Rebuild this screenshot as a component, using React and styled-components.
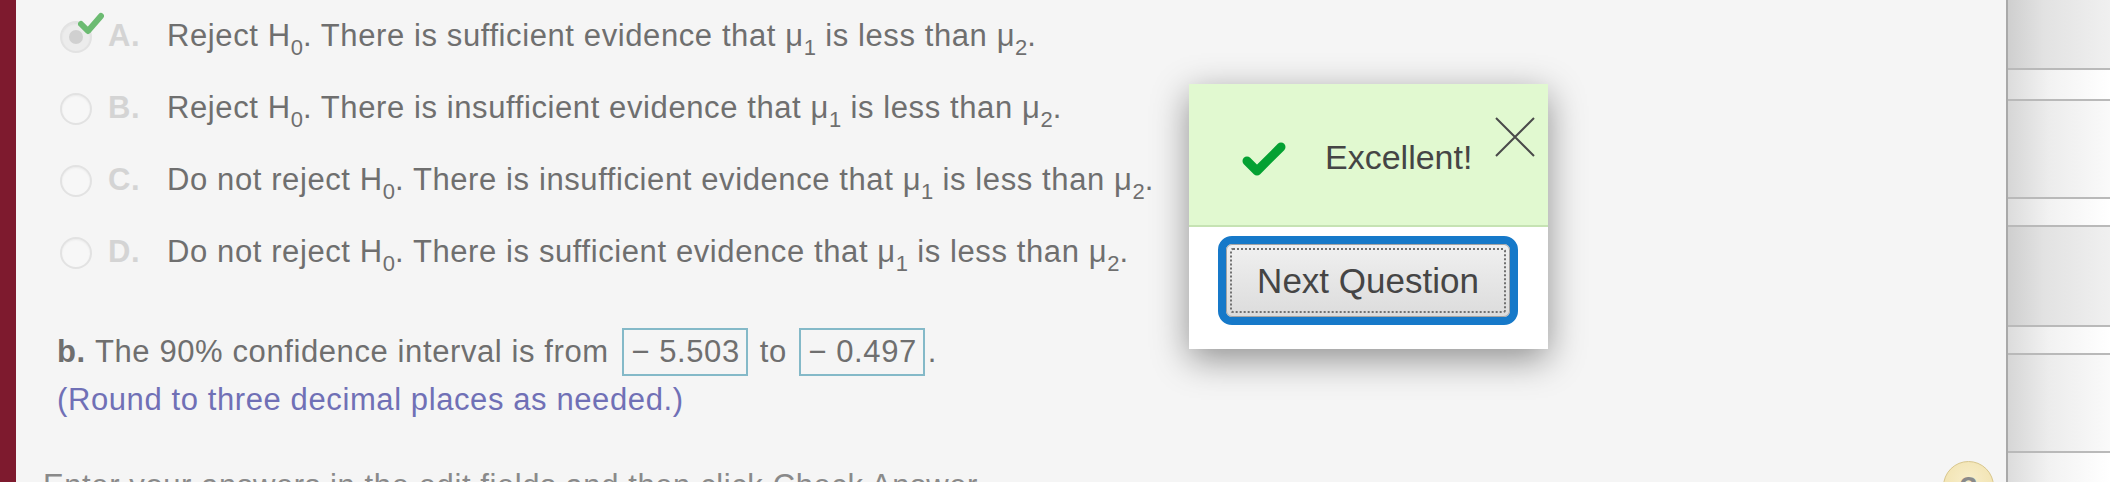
import React from "react";
import styled, { createGlobalStyle } from "styled-components";

const Global = createGlobalStyle`
  html, body, #root { margin: 0; padding: 0; height: 100%; }
  body { overflow: hidden; background: #f5f5f5; font-family: "Liberation Sans", Arial, sans-serif; }
`;

const Page = styled.div`
  position: relative;
  display: flex;
  height: 482px;
  width: 2110px;
  overflow: hidden;
`;

const Bar = styled.div`
  width: 16px;
  flex: none;
  background: #7e1a2e;
`;

const Content = styled.div`
  flex: 1;
  background: #f5f5f5;
  color: #6f6f6f;
  font-size: 31px;
  letter-spacing: 0.6px;
`;

const Options = styled.div`
  display: flex;
  flex-direction: column;
  padding-left: 44px;
`;

const Row = styled.div`
  display: flex;
  align-items: center;
  height: 72px;
  line-height: 72px;
  white-space: nowrap;
`;

const RadioWrap = styled.span`
  position: relative;
  width: 32px;
  height: 32px;
  flex: none;
  margin-top: 2px;
`;

const Radio = styled.span`
  display: block;
  box-sizing: border-box;
  width: 32px;
  height: 32px;
  border-radius: 50%;
  border: 2px solid #e2e2e2;
  background: ${(p) => (p.$checked ? "#ececec" : "#f7f7f7")};
  box-shadow: inset 0 1px 2px rgba(0, 0, 0, 0.05);
  &::after {
    content: "";
    display: ${(p) => (p.$checked ? "block" : "none")};
    position: absolute;
    left: 9px;
    top: 9px;
    width: 14px;
    height: 14px;
    border-radius: 50%;
    background: #d0d0d0;
  }
`;

const RadioCheck = styled.svg`
  position: absolute;
  left: 18px;
  top: -10px;
`;

const Letter = styled.span`
  width: 59px;
  margin-left: 16px;
  flex: none;
  font-weight: bold;
  color: #d4d4d4;
`;

const Sub = styled.sub`
  font-size: 22px;
  line-height: 1;
  vertical-align: -9px;
  letter-spacing: 0;
`;

const PartB = styled.div`
  margin-top: 40px;
  padding-left: 41px;
  line-height: 48px;
  white-space: nowrap;
`;

const Line = styled.div`
  display: flex;
  align-items: center;
  height: 48px;
`;

const Bold = styled.b`
  font-weight: bold;
`;

const Answer = styled.span`
  box-sizing: border-box;
  display: inline-flex;
  align-items: center;
  justify-content: flex-end;
  height: 48px;
  width: 126px;
  padding-right: 6px;
  border: 2px solid #84b9c8;
  margin: 0 ${(p) => p.$after}px 0 ${(p) => p.$before}px;
`;

const Hint = styled.div`
  color: #7070b6;
  height: 48px;
`;

const Footer = styled.div`
  margin-top: 38px;
  padding-left: 27px;
  line-height: 48px;
  color: #8a8a8a;
  white-space: nowrap;
`;

const Sidebar = styled.div`
  width: 104px;
  flex: none;
  display: flex;
  flex-direction: column;
  border-left: 2px solid #a9a9a9;
  box-sizing: border-box;
`;

const Stripe = styled.div`
  flex: ${(p) => (p.$h ? "none" : "1")};
  height: ${(p) => (p.$h ? `${p.$h}px` : "auto")};
  border-bottom: ${(p) => (p.$h ? "2px solid #b9b9b9" : "none")};
  background: ${(p) =>
    p.$tone === "dark"
      ? "linear-gradient(to right, #cfcfcf 0%, #e2e2e2 35%, #f0f0f0 100%)"
      : p.$tone === "mid"
      ? "linear-gradient(to right, #d6d6d6 0%, #ececec 40%, #fafafa 100%)"
      : "linear-gradient(to right, #dcdcdc 0%, #f2f2f2 40%, #ffffff 100%)"};
`;

const Popup = styled.div`
  position: absolute;
  left: 1189px;
  top: 84px;
  width: 359px;
  background: #fff;
  box-shadow: 0 10px 34px rgba(0, 0, 0, 0.42);
  font-family: "Liberation Sans", Arial, sans-serif;
  color: #454545;
`;

const Banner = styled.div`
  position: relative;
  height: 143px;
  background: #e1f9d0;
  border-bottom: 2px solid #c6e3b3;
  display: flex;
  align-items: flex-start;
  padding: 57px 0 0 52px;
  box-sizing: border-box;
`;

const Message = styled.span`
  font-size: 34px;
  line-height: 34px;
  margin-left: 38px;
  margin-top: -1px;
`;

const Close = styled.svg`
  position: absolute;
  left: 306px;
  top: 33px;
`;

const Actions = styled.div`
  height: 122px;
  padding: 9px 0 0 29px;
  box-sizing: border-box;
`;

const FocusRing = styled.div`
  box-sizing: border-box;
  width: 300px;
  height: 89px;
  border: 8px solid #1679c9;
  border-radius: 14px;
  display: flex;
`;

const Button = styled.button`
  flex: 1;
  margin: 0;
  border: 1px solid #a4a4a4;
  border-radius: 6px;
  background: linear-gradient(to bottom, #f0f0f0, #dcdcdc);
  font-family: "Liberation Sans", Arial, sans-serif;
  font-size: 35px;
  color: #454545;
  position: relative;
  padding: 0;
  &::after {
    content: "";
    position: absolute;
    inset: 3px;
    border: 2px dotted #707070;
    border-radius: 3px;
  }
`;

const Help = styled.div`
  position: absolute;
  left: 1943px;
  top: 461px;
  width: 51px;
  height: 51px;
  box-sizing: border-box;
  border-radius: 50%;
  border: 1.5px solid #d8c68c;
  background: radial-gradient(circle at 50% 40%, #f8eecb, #efdfa8);
  color: #8a8a8a;
  font-weight: bold;
  font-size: 30px;
  text-align: center;
  line-height: 50px;
`;

const options = [
  { l: "A.", pre: "Reject H", mid: "sufficient", checked: true },
  { l: "B.", pre: "Reject H", mid: "insufficient" },
  { l: "C.", pre: "Do not reject H", mid: "insufficient" },
  { l: "D.", pre: "Do not reject H", mid: "sufficient" },
];

export default function App() {
  return (
    <>
      <Global />
      <Page>
        <Bar />
        <Content>
          <Options>
            {options.map((o) => (
              <Row key={o.l}>
                <RadioWrap>
                  <Radio $checked={o.checked} />
                  {o.checked && (
                    <RadioCheck width="26" height="24" viewBox="0 0 26 24">
                      <path d="M3 13 L10 20 L23 5" fill="none" stroke="#6cbb72" strokeWidth="6" strokeLinecap="round" strokeLinejoin="round" />
                    </RadioCheck>
                  )}
                </RadioWrap>
                <Letter>{o.l}</Letter>
                <span>
                  {o.pre}
                  <Sub>0</Sub>. There is {o.mid} evidence that μ<Sub>1</Sub> is less than μ<Sub>2</Sub>.
                </span>
              </Row>
            ))}
          </Options>
          <PartB>
            <Line>
              <Bold>b.</Bold>&nbsp;The 90% confidence interval is from
              <Answer $before={13} $after={12}>− 5.503</Answer>
              to
              <Answer $before={12} $after={3}>− 0.497</Answer>.
            </Line>
            <Hint>(Round to three decimal places as needed.)</Hint>
          </PartB>
          <Footer>Enter your answers in the edit fields and then click Check Answer.</Footer>
        </Content>
        <Sidebar>
          <Stripe $h={68} $tone="dark" />
          <Stripe $h={29} $tone="light" />
          <Stripe $h={96} $tone="mid" />
          <Stripe $h={26} $tone="light" />
          <Stripe $h={98} $tone="dark" />
          <Stripe $h={26} $tone="light" />
          <Stripe $h={96} $tone="mid" />
          <Stripe $tone="light" />
        </Sidebar>
        <Help>?</Help>
        <Popup>
          <Banner>
            <svg width="46" height="36" viewBox="0 0 46 36">
              <path d="M6 20 L16 30 L40 6" fill="none" stroke="#04a132" strokeWidth="9" strokeLinecap="round" strokeLinejoin="round" />
            </svg>
            <Message>Excellent!</Message>
            <Close width="40" height="40" viewBox="0 0 40 40">
              <path d="M1 1 L39 39 M39 1 L1 39" stroke="#4a4a4a" strokeWidth="2" />
            </Close>
          </Banner>
          <Actions>
            <FocusRing>
              <Button>Next Question</Button>
            </FocusRing>
          </Actions>
        </Popup>
      </Page>
    </>
  );
}
